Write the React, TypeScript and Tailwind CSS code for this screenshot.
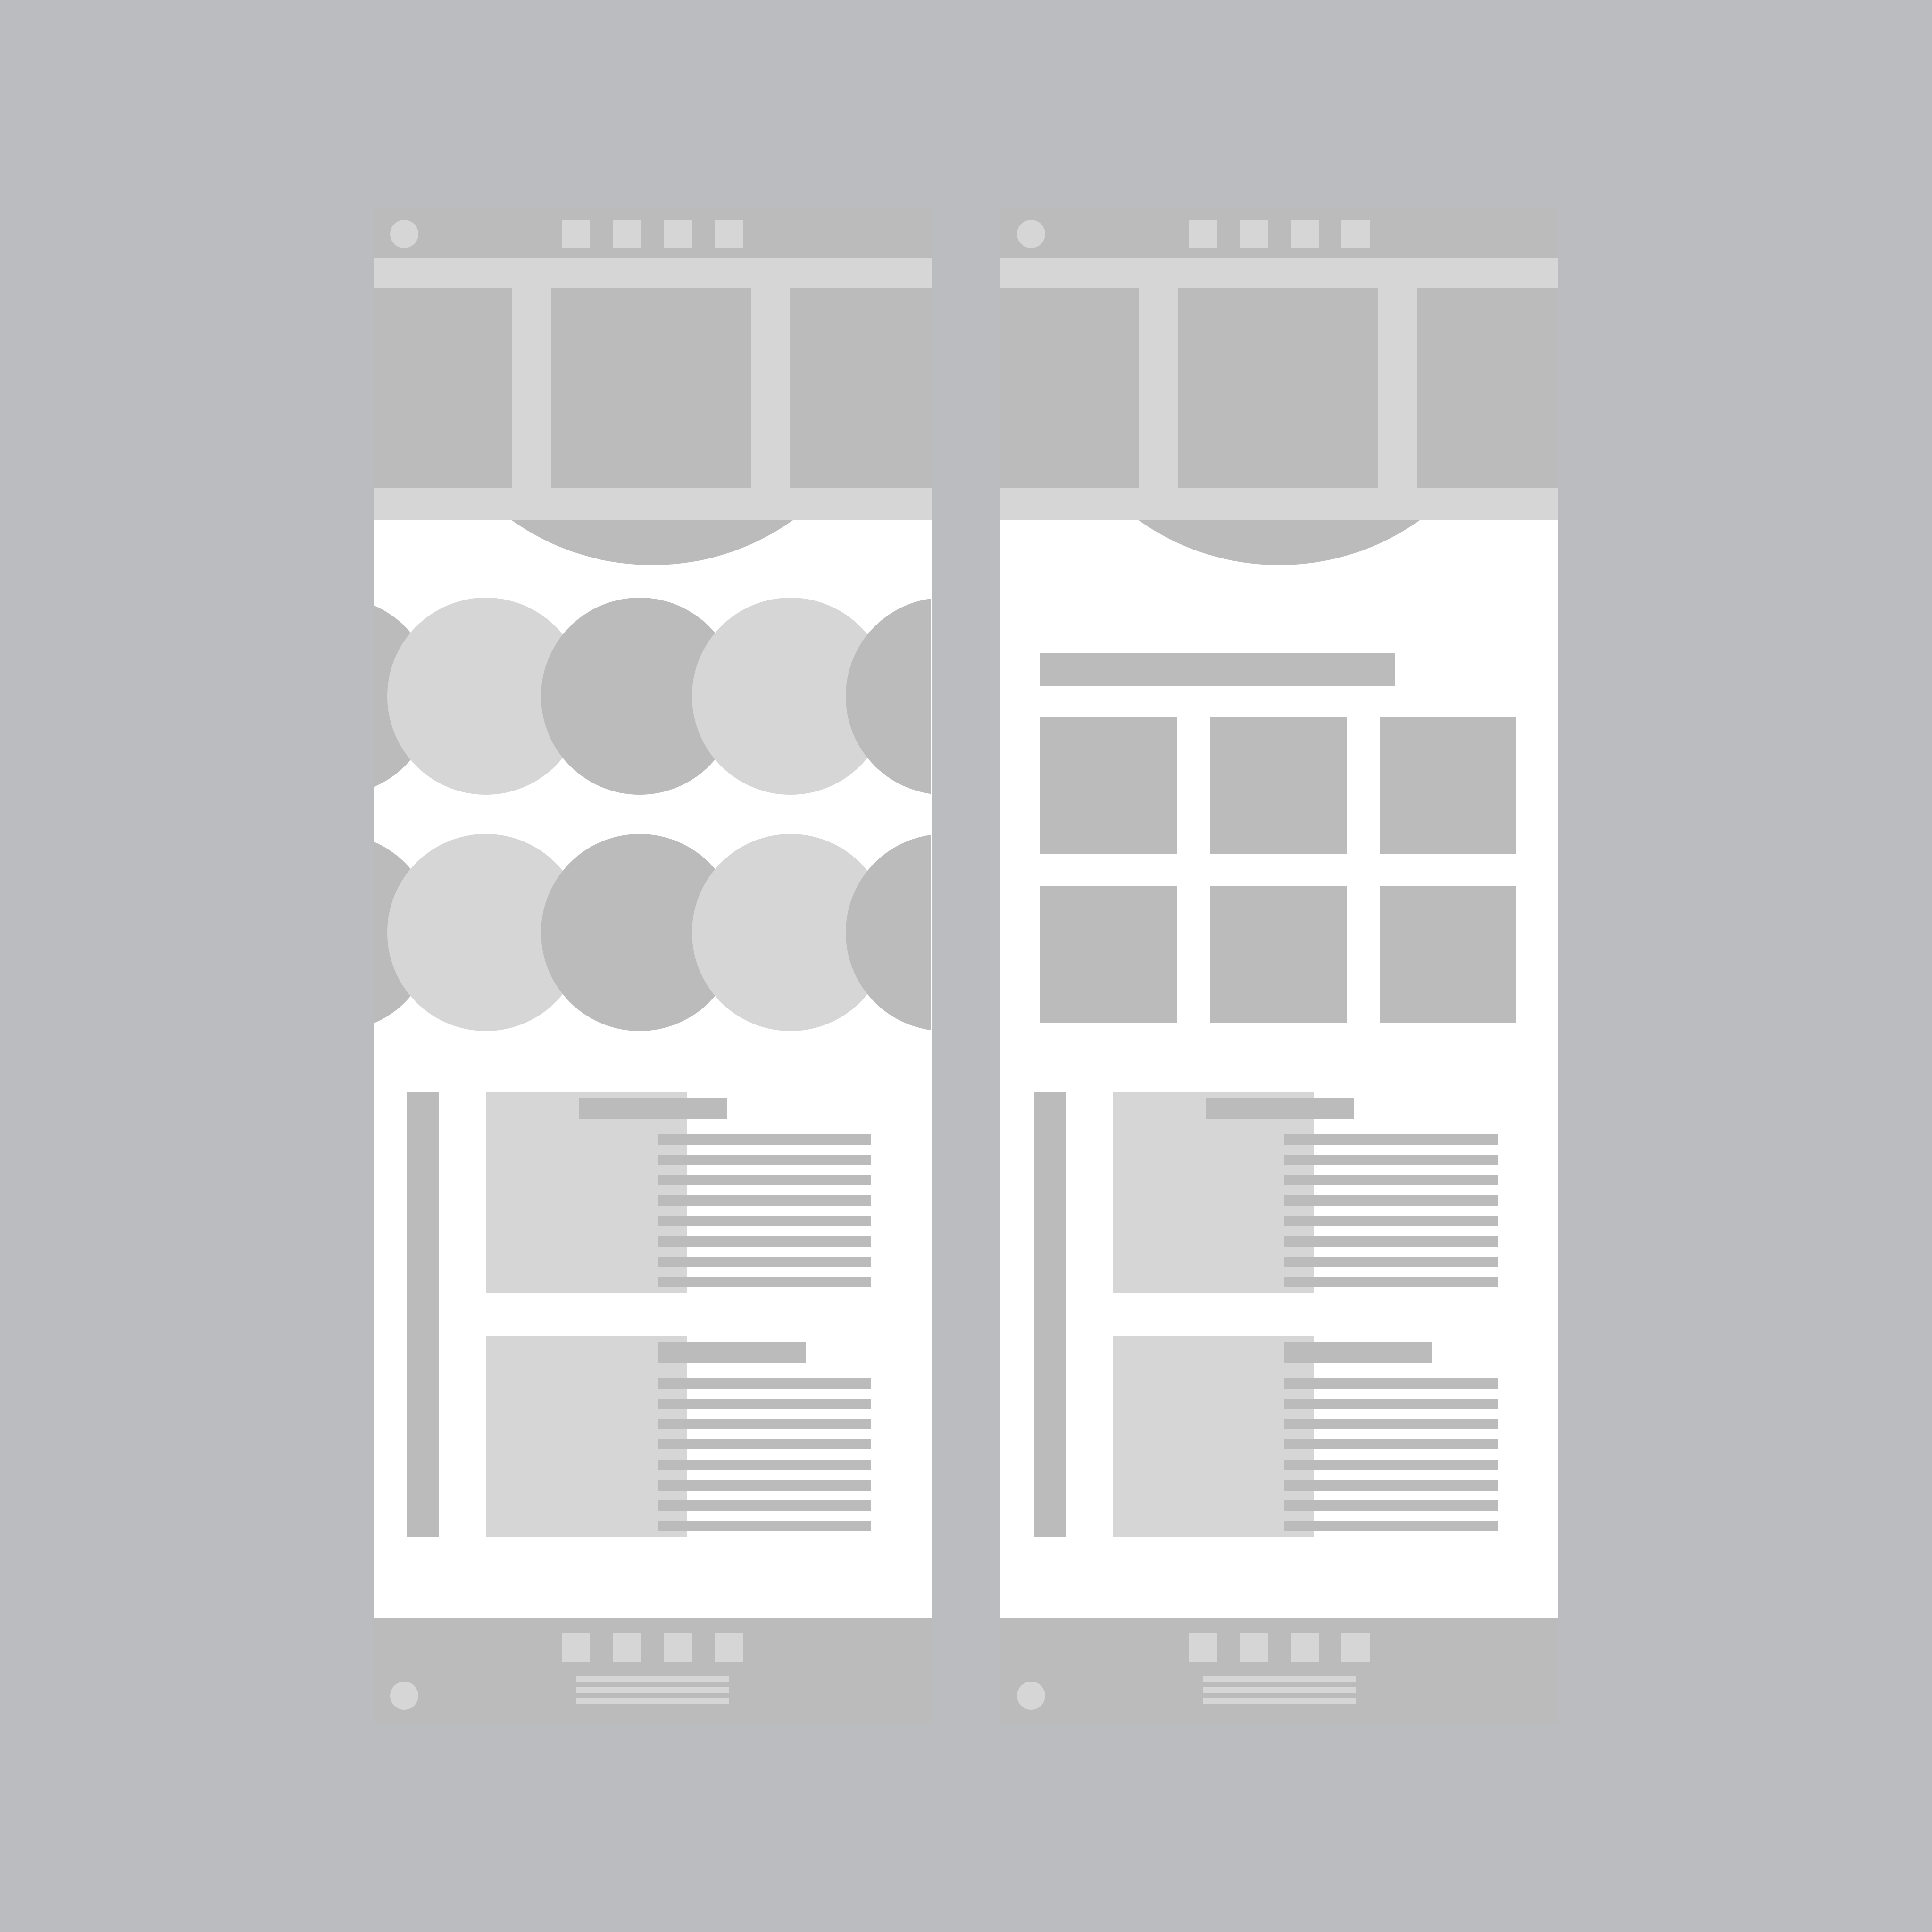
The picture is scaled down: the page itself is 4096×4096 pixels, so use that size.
import React from "react";

const navItems = ["Home", "Work", "Studio", "Contact"];

function NavSquares() {
  return (
    <nav aria-label="Sections" className="flex gap-12">
      {navItems.map((item) => (
        <a key={item} href="#" aria-label={item} className="size-[60px] bg-[#d6d6d6]" />
      ))}
    </nav>
  );
}

function Header() {
  return (
    <header className="grid h-[104px] grid-cols-[1fr_auto_1fr] items-start bg-[#bbbbbb] pt-6">
      <a href="#" aria-label="Logo" className="ml-[35px] size-[60px] rounded-full bg-[#d6d6d6]" />
      <NavSquares />
    </header>
  );
}

function Hero() {
  return (
    <section className="grid grid-cols-[294fr_425fr_300fr] gap-x-[82px] bg-[#d6d6d6] pt-16 pb-[68px]">
      <div className="h-[425px] bg-[#bbbbbb]" />
      <div className="h-[425px] bg-[#bbbbbb]" />
      <div className="h-[425px] bg-[#bbbbbb]" />
    </section>
  );
}

function Bowl() {
  return (
    <svg viewBox="0 0 596 95" className="mx-auto block h-[95px] w-[596px]" aria-hidden="true">
      <path d="M0 0A514 514 0 0 0 596 0Z" fill="#bbbbbb" />
    </svg>
  );
}

function CircleRow() {
  return (
    <div className="mx-px flex overflow-hidden">
      <div className="-ml-[291px] size-[418px] shrink-0 rounded-full bg-[#bbbbbb]" />
      <div className="-ml-[99px] size-[418px] shrink-0 rounded-full bg-[#d6d6d6]" />
      <div className="-ml-[92px] size-[418px] shrink-0 rounded-full bg-[#bbbbbb]" />
      <div className="-ml-[98px] size-[418px] shrink-0 rounded-full bg-[#d6d6d6]" />
      <div className="-ml-[92px] size-[418px] shrink-0 rounded-full bg-[#bbbbbb]" />
    </div>
  );
}

function CircleGallery() {
  return (
    <section className="flex h-[1118px] flex-col gap-[83px] pt-[69px]">
      <CircleRow />
      <CircleRow />
    </section>
  );
}

function TileGallery() {
  return (
    <section className="h-[1118px] px-[84px] pt-[187px]">
      <div className="h-[69px] w-[753px] bg-[#bbbbbb]" />
      <div className="mt-[67px] grid grid-cols-[290px_290px_290px] gap-x-[70px] gap-y-[68px]">
        {[0, 1, 2, 3, 4, 5].map((tile) => (
          <div key={tile} className="h-[290px] bg-[#bbbbbb]" />
        ))}
      </div>
    </section>
  );
}

function Article({ shifted = false }: { shifted?: boolean }) {
  return (
    <article className="flex h-[425px]">
      <div className="w-[425px] shrink-0 bg-[#d6d6d6]" />
      <div className="relative -ml-[62px] flex w-[453px] flex-col gap-[33px] py-3">
        <div className={`h-11 w-[314px] bg-[#bbbbbb] ${shifted ? "-ml-[167px]" : ""}`} />
        <div className="flex flex-1 flex-col justify-between">
          {[0, 1, 2, 3, 4, 5, 6, 7].map((line) => (
            <div key={line} className="h-[22px] bg-[#bbbbbb]" />
          ))}
        </div>
      </div>
    </article>
  );
}

function Articles() {
  return (
    <section className="flex gap-[100px] pb-[172px] pl-[71px]">
      <div className="w-[68px] bg-[#bbbbbb]" />
      <div className="flex flex-col gap-[92px]">
        <Article shifted />
        <Article />
      </div>
    </section>
  );
}

function Footer() {
  return (
    <footer className="grid h-[224px] grid-cols-[1fr_auto_1fr] bg-[#bbbbbb] pt-[33px]">
      <a href="#" aria-label="Logo" className="mt-[102px] ml-[35px] size-[60px] rounded-full bg-[#d6d6d6]" />
      <div className="flex flex-col items-center">
        <NavSquares />
        <div className="mt-[31px] flex w-[324px] flex-col gap-[11px]">
          <div className="h-3 bg-[#d6d6d6]" />
          <div className="h-3 bg-[#d6d6d6]" />
          <div className="h-3 bg-[#d6d6d6]" />
        </div>
      </div>
    </footer>
  );
}

function Screen({ children }: { children: React.ReactNode }) {
  return (
    <div className="max-w-[1183px] flex-1 overflow-hidden bg-white">
      <Header />
      <Hero />
      <Bowl />
      {children}
      <Articles />
      <Footer />
    </div>
  );
}

export default function App() {
  return (
    <main className="flex min-h-screen items-center justify-center gap-[146px] border-t border-r border-b border-t-[#d6d7da] border-r-[#e4e4e6] border-b-[#cfcfd1] bg-[#bbbcc0] font-['Inter',sans-serif]">
      <Screen>
        <CircleGallery />
      </Screen>
      <Screen>
        <TileGallery />
      </Screen>
    </main>
  );
}
